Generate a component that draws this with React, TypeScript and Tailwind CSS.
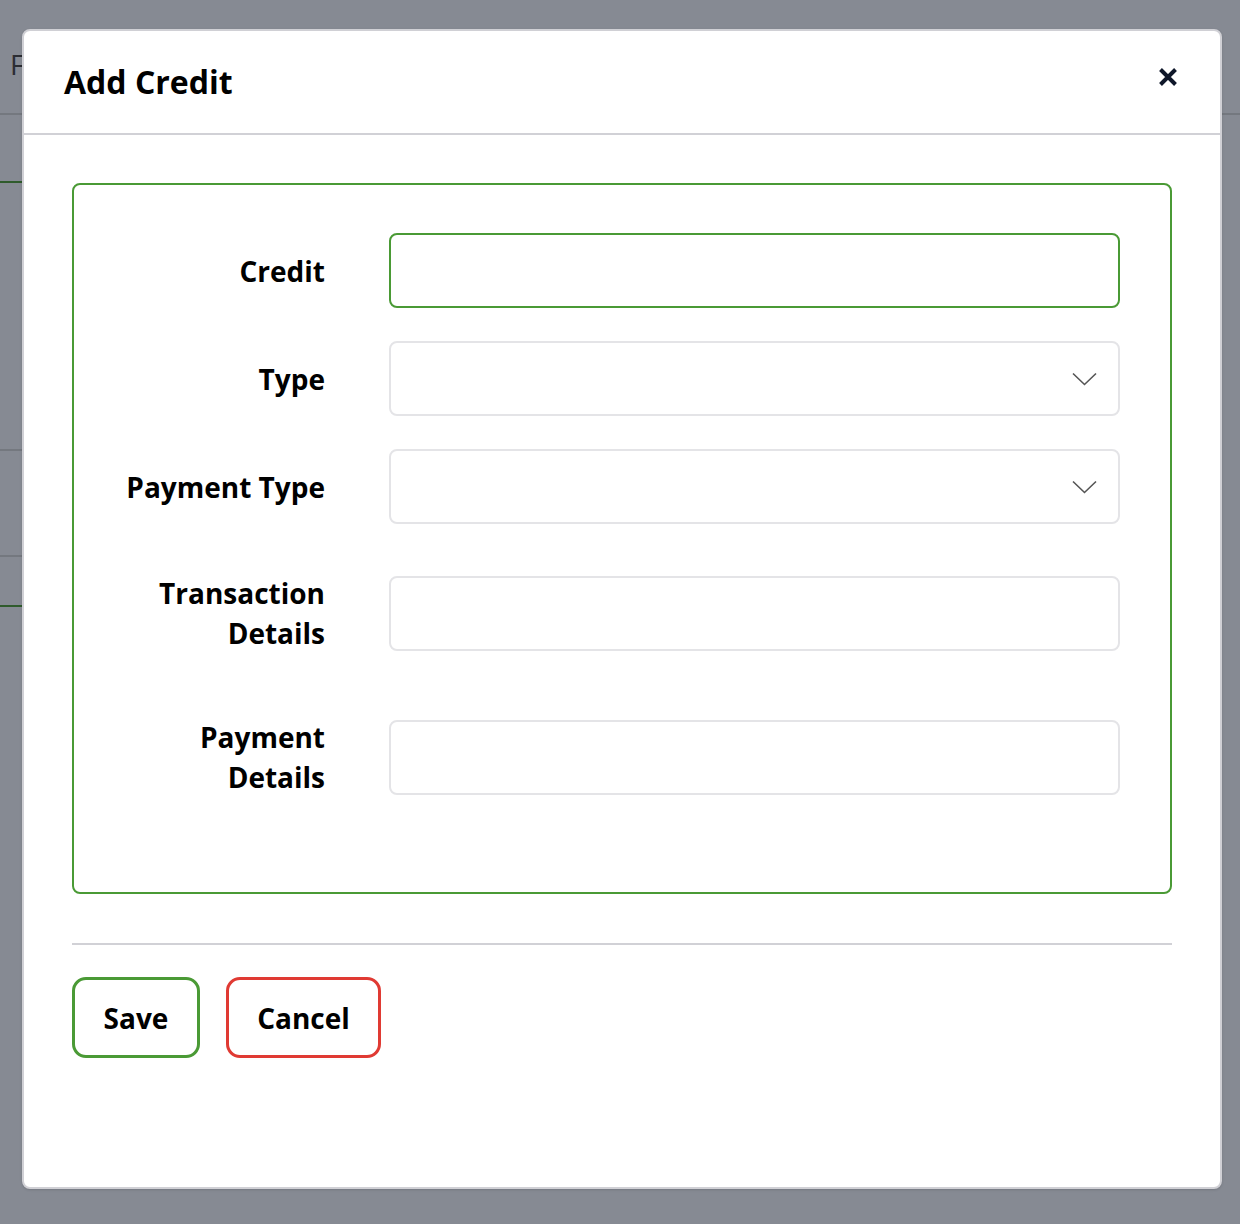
import React from 'react';

type Field = {
  label: string[];
  select?: boolean;
  focused?: boolean;
  spacing: string;
};

const fields: Field[] = [
  { label: ['Credit'], focused: true, spacing: '' },
  { label: ['Type'], select: true, spacing: 'mt-[33px]' },
  { label: ['Payment Type'], select: true, spacing: 'mt-[33px]' },
  { label: ['Transaction', 'Details'], spacing: 'mt-[49px]' },
  { label: ['Payment', 'Details'], spacing: 'mt-[64px]' },
];

const Chevron = () => (
  <svg width="25" height="14" viewBox="0 0 25 14" fill="none" className="absolute right-[21px] top-[29px]">
    <polyline points="1,1.5 12.5,12.5 24,1.5" stroke="#555" strokeWidth="1.6" />
  </svg>
);

const CloseIcon = () => (
  <svg width="20" height="20" viewBox="0 0 20 20" fill="none">
    <path d="M2.5 2.5 17.5 17.5 M17.5 2.5 2.5 17.5" stroke="#0f172a" strokeWidth="4" />
  </svg>
);

function FormRow({ field }: { field: Field }) {
  const border = field.focused ? 'border-[#4a9a35]' : 'border-[#e4e4e7]';
  return (
    <div className={`flex items-center ${field.spacing}`}>
      <label className="w-[251px] shrink-0 text-right text-[28px] leading-[40px] font-bold text-black">
        {field.label.map((line) => (
          <div key={line}>{line}</div>
        ))}
      </label>
      <div className={`relative ml-[64px] flex-1 h-[75px] rounded-[8px] border-2 bg-white ${border}`}>
        {field.select && <Chevron />}
      </div>
    </div>
  );
}

export default function App() {
  return (
    <div className="relative h-[1224px] w-full overflow-hidden bg-[#868a93] font-['Open_Sans',sans-serif]">
      {/* dimmed page underneath */}
      <div className="h-[115px] border-b-2 border-[#74787f] pl-[10px] pt-[44px]">
        <span className="text-[28px] leading-[40px] text-[#2b2d33]">Fees</span>
      </div>
      <div className="w-[600px]">
        <div className="mt-[66px] border-t-2 border-[#2f5b2c]" />
        <div className="mt-[266px] border-t-2 border-[#74787f]" />
        <div className="mt-[104px] border-t-2 border-[#74787f]" />
        <div className="mt-[48px] border-t-2 border-[#2f5b2c]" />
      </div>

      {/* modal */}
      <div className="absolute left-[22px] top-[29px] flex h-[1160px] w-[1200px] flex-col rounded-[8px] border-2 border-[#d0d0d5] bg-white shadow-sm">
        <div className="flex h-[104px] shrink-0 items-start justify-between border-b-2 border-[#d1d1d6] pl-[40px] pr-[42px]">
          <h2 className="pt-[31px] text-[32px] leading-[40px] font-bold text-black">Add Credit</h2>
          <button className="mt-[36px]">
            <CloseIcon />
          </button>
        </div>

        <div className="px-[48px] pt-[48px]">
          <div className="rounded-[8px] border-2 border-[#4a9a35] pt-[48px] pr-[50px] pb-[95px]">
            {fields.map((f) => (
              <FormRow key={f.label.join(' ')} field={f} />
            ))}
          </div>

          <div className="mt-[49px] border-t-2 border-[#d1d1d6]" />

          <div className="mt-[32px] flex gap-[26px]">
            <button className="h-[81px] w-[128px] rounded-[14px] border-[3px] border-[#4a9a35] text-[28px] font-bold text-black">
              Save
            </button>
            <button className="h-[81px] w-[155px] rounded-[14px] border-[3px] border-[#e03a33] text-[28px] font-bold text-black">
              Cancel
            </button>
          </div>
        </div>
      </div>
    </div>
  );
}
